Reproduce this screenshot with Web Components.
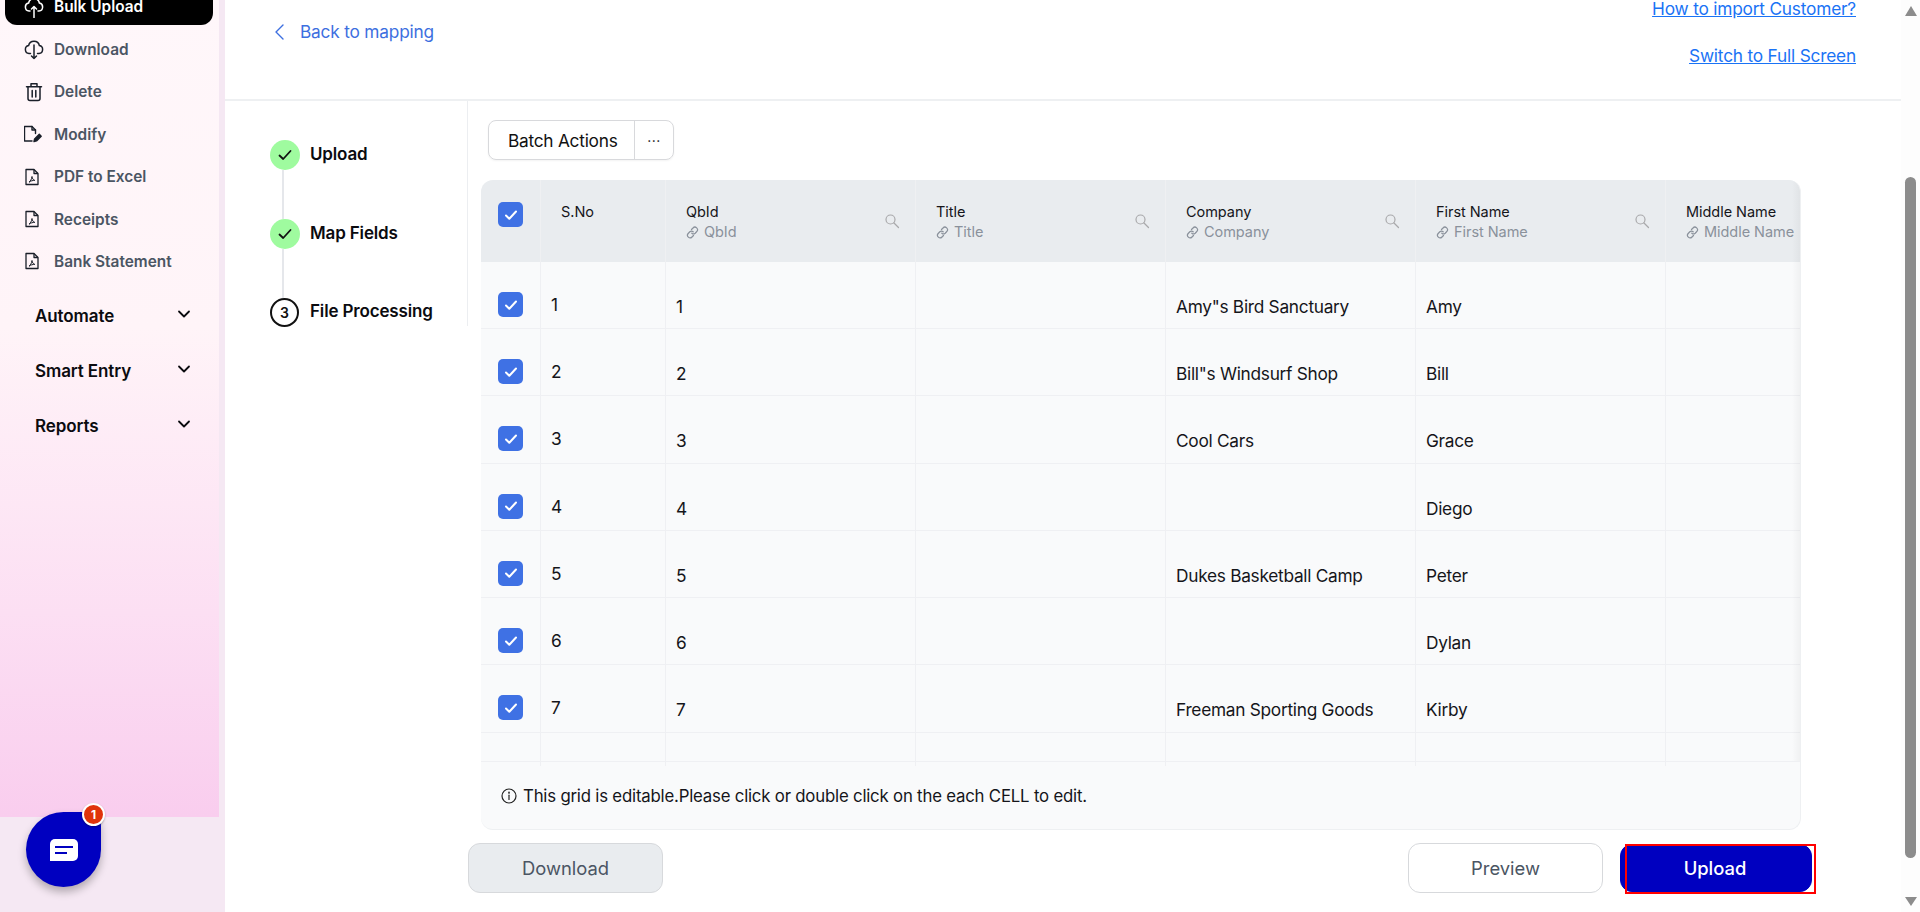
<!DOCTYPE html>
<html><head><meta charset="utf-8">
<style>
html,body{margin:0;height:100%;overflow:hidden;background:#fff;font-family:Inter,"Liberation Sans",sans-serif;}
</style></head><body>
<x-app></x-app>
<script>
const ICONS={
 up:'<svg width="20" height="22" viewBox="0 0 20 22" fill="none" stroke="currentColor" stroke-width="1.5" stroke-linecap="round" stroke-linejoin="round"><path d="M6 15H5A4 4 0 0 1 4.600 7.100 5.500 5.500 0 0 1 15.400 7.100 4 4 0 0 1 15 15H14"/><path d="M10 21.500V10.500M7.500 13 10 10.500 12.500 13"/></svg>',
 down:'<svg width="20" height="22" viewBox="0 0 20 22" fill="none" stroke="currentColor" stroke-width="1.5" stroke-linecap="round" stroke-linejoin="round"><path d="M6.500 15.500H5A4 4 0 0 1 4.600 7.600 5.500 5.500 0 0 1 15.400 7.600 4 4 0 0 1 15 15.500H13.500"/><path d="M10 7V20.500M7.500 18 10 20.500 12.500 18"/></svg>',
 trash:'<svg width="20" height="20" viewBox="0 0 20 20" fill="none" stroke="currentColor" stroke-width="1.5" stroke-linecap="round" stroke-linejoin="round"><path d="M2.500 4.800h15M7 4.800V1.800h6v3M4 4.800v11.700a2 2 0 0 0 2 2h8a2 2 0 0 0 2-2V4.800M8.200 8.500v6.500M11.800 8.500v6.500"/></svg>',
 edit:'<svg width="20" height="20" viewBox="1.500 -1 20 20" fill="none" stroke="currentColor" stroke-width="1.400" stroke-linecap="round" stroke-linejoin="round"><path d="M9.500 16H2V1.500h7.500l3.500 3.500V8.500"/><path d="M9.500 1.500V5H13"/><path d="M11.500 16.500l.6-2.500 4.700-4.700 1.900 1.900-4.700 4.700z" fill="currentColor"/></svg>',
 pdf:'<svg width="20" height="20" viewBox="2 0 20 20" fill="none" stroke="currentColor" stroke-width="1.300" stroke-linejoin="round"><path d="M4 2.500h8l4 4V17.500H4z"/><path d="M12 2.500v4h4"/><path d="M7 15.200c1.500-.9 2.600-3 3-5.700.3 2 1 3.300 2.800 3.900-2-.1-4 .5-5.800 1.800z" stroke-width="1"/></svg>',
 chev:'<svg width="14" height="10" viewBox="0 0 14 10" fill="none" stroke="currentColor" stroke-width="1.800" stroke-linecap="round" stroke-linejoin="round"><path d="M2 2.500 7 7.500 12 2.500"/></svg>',
 check:'<svg width="16" height="14" viewBox="0 0 16 14" fill="none" stroke="currentColor" stroke-width="1.800" stroke-linecap="round" stroke-linejoin="round"><path d="M2.500 7.500 6.200 11 13.500 3"/></svg>',
 tick:'<svg width="14" height="12" viewBox="0 0 14 12" fill="none" stroke="currentColor" stroke-width="2" stroke-linecap="round" stroke-linejoin="round"><path d="M2 6.500 5.300 9.800 12 2.500"/></svg>',
 search:'<svg width="16" height="16" viewBox="0 0 16 16" fill="none" stroke="#a9a9ab" stroke-width="1.200" stroke-linecap="round"><circle cx="6.500" cy="6.500" r="4.500"/><path d="M10 10l4.500 4.500"/></svg>',
 link:'<svg width="13" height="13" viewBox="0 0 13 13" fill="none" stroke="#8a919b" stroke-width="1.200" stroke-linecap="round"><path d="M5.500 3.500 7 2a2.500 2.500 0 0 1 3.800 3.500L9.200 7.200a2.500 2.500 0 0 1-3.400 0"/><path d="M7.500 9.500 6 11a2.500 2.500 0 0 1-3.800-3.500L3.800 5.800a2.500 2.500 0 0 1 3.400 0"/></svg>',
 info:'<svg width="16" height="16" viewBox="0 0 16 16" fill="none" stroke="#222" stroke-width="1.200" stroke-linecap="round"><circle cx="8" cy="8" r="7"/><path d="M8 7.200v4.300"/><path d="M8 4.300v.8" stroke-width="1.600"/></svg>'
};
function def(name,css,render){
 customElements.define(name,class extends HTMLElement{
  connectedCallback(){ if(this.shadowRoot) return; const s=this.attachShadow({mode:'open'}); s.innerHTML='<style>'+css+'</style>'+render(this); }
 });
}
def('x-nav-item',`
:host{display:flex;align-items:center;height:42.400px;padding-left:24px;font-size:15.400px;font-weight:600;color:#4b5563;gap:10px}
.i{width:20px;height:20px;display:flex;align-items:center;justify-content:center;color:#1a1f29}
`,h=>`<span class="i">${ICONS[h.getAttribute('icon')]}</span><slot></slot>`);
def('x-nav-active',`
:host{display:flex;align-items:center;box-sizing:border-box;height:40px;margin:-15px 0 3.300px 5px;width:208px;padding:3px 0 0 19px;gap:10px;background:#000;color:#fff;border-radius:0 0 12px 12px;font-size:15.400px;font-weight:600;line-height:12px}
.i{width:20px;height:20px;display:flex;align-items:center;justify-content:center}
`,h=>`<span class="i">${ICONS.up}</span><slot></slot>`);
def('x-nav-group',`
:host{display:flex;align-items:center;justify-content:space-between;height:55px;padding:0 28px 0 35px;font-size:17px;letter-spacing:-.1px;font-weight:600;color:#0b0b0f}
span{display:flex;margin-top:-4px}
`,h=>`<slot></slot><span>${ICONS.chev}</span>`);
def('x-sidebar',`
:host{display:block;position:relative;background:#f5e8f3;height:912px;overflow:hidden}
.g{width:219px;height:817px;background:linear-gradient(180deg,#fff7fa 0%,#fff4f8 40%,#fcdff3 75%,#f9cdee 100%)}
nav{display:flex;flex-direction:column}
.groups{margin-top:6px;}
`,h=>`<div class="g"><nav>
<x-nav-active>Bulk Upload</x-nav-active>
<x-nav-item icon="down">Download</x-nav-item>
<x-nav-item icon="trash">Delete</x-nav-item>
<x-nav-item icon="edit">Modify</x-nav-item>
<x-nav-item icon="pdf">PDF to Excel</x-nav-item>
<x-nav-item icon="pdf">Receipts</x-nav-item>
<x-nav-item icon="pdf">Bank Statement</x-nav-item>
<div class="groups"><x-nav-group>Automate</x-nav-group><x-nav-group>Smart Entry</x-nav-group><x-nav-group>Reports</x-nav-group></div>
</nav></div>`);
def('x-chat',`
:host{position:absolute;left:26px;top:812px;width:75px;height:75px;display:flex;align-items:center;justify-content:center;background:#0000c0;border-radius:50% 14px 50% 50%;box-shadow:0 5px 8px rgba(0,0,0,.28)}
svg{display:block}
.b{position:absolute;left:56px;top:-9px;width:19px;height:19px;border-radius:50%;background:#e0330b;border:2px solid #fff;color:#fff;font:700 12px/19px Inter,sans-serif;text-align:center;box-shadow:0 1px 2px rgba(0,0,0,.3)}
`,h=>`<svg width="28" height="22" viewBox="0 0 28 22"><path d="M5 0h18a5 5 0 0 1 5 5v12a5 5 0 0 1-5 5H0V5a5 5 0 0 1 5-5z" fill="#fff"/><path d="M5 8h18" stroke="#0000c0" stroke-width="2"/><path d="M5 14h12" stroke="#0000c0" stroke-width="2"/></svg><span class="b">1</span>`);
def('x-header',`
:host{display:flex;justify-content:space-between;box-sizing:border-box;height:101px;flex:none;border-bottom:2px solid #eef0f2;padding:0 45px 0 50px;font-size:17.300px;letter-spacing:-.2px;line-height:24px}
.back{display:flex;align-items:center;gap:16px;color:#3d6fe0;height:24px;margin-top:20px}
.links{display:flex;flex-direction:column;align-items:flex-end;gap:23px;margin-top:-3px}
a{color:#1a73f5;text-decoration:underline}
`,h=>`<div class="back"><svg width="9" height="16" viewBox="0 0 9 16" fill="none" stroke="#3d6fe0" stroke-width="1.400" stroke-linecap="round" stroke-linejoin="round"><path d="M8 1 1 8l7 7"/></svg><span>Back to mapping</span></div><div class="links"><a>How to import Customer?</a><a>Switch to Full Screen</a></div>`);
def('x-step',`
:host{display:block}
.r{display:flex;align-items:center;gap:10px;font-size:17px;letter-spacing:-.15px;font-weight:600;color:#0b0b0f}
.c{width:30px;height:30px;border-radius:50%;background:#9ffb9f;display:flex;align-items:center;justify-content:center;color:#111;box-sizing:border-box}
:host([num]) .c{width:29px;height:29px;background:#fff;border:2px solid #111;font-size:14px;font-weight:600;margin-right:1px}
.l{width:2px;height:49px;background:#e5e7eb;margin-left:12px}
:host([num]) .l{display:none}
span.t{margin-top:-3px}
`,h=>`<div class="r"><span class="c">${h.getAttribute('num')||ICONS.check}</span><span class="t"><slot></slot></span></div><div class="l"></div>`);
def('x-stepper',`
:host{display:block;box-sizing:content-box;width:197px;height:186px;padding:39px 0 0 45px;border-right:1px solid #eceef1;align-self:flex-start;flex:none}
`,h=>`<x-step>Upload</x-step><x-step>Map Fields</x-step><x-step num="3">File Processing</x-step>`);
def('x-batch',`
:host{display:inline-flex;align-self:flex-start;height:40px;box-sizing:border-box;margin:0 0 20px 20px;border:1px solid #d8d9dc;border-radius:8px;font-size:17.300px;letter-spacing:-.25px;color:#111;box-shadow:0 1px 2px rgba(0,0,0,.05)}
.a{display:flex;align-items:center;padding:1px 0 0 19px;border-right:1px solid #d8d9dc;width:126px;box-sizing:content-box;white-space:nowrap}
.m{width:38px;display:flex;align-items:center;justify-content:center;font-size:14px;letter-spacing:.5px}
`,h=>`<div class="a">Batch Actions</div><div class="m">···</div>`);
const COLS='60px 125px 250px 250px 250px 250px 136px';
const css_row=`:host{display:grid;grid-template-columns:${COLS};background:#f9fafb;border-bottom:1px solid #eff0f3;box-sizing:border-box;height:var(--h,67.300px)}
div{border-right:1px solid #eff0f3;box-sizing:border-box;font-size:17.300px;letter-spacing:-.28px;line-height:24px;color:#15151a;white-space:nowrap}
.cb{padding:30px 0 0 17px}
.sn{padding:31px 0 0 10px}
.d{padding:33px 0 0 10px}
.box{width:25px;height:25px;background:#3f71e4;border-radius:5px;display:flex;align-items:center;justify-content:center;color:#fff;border:0;padding:0}
`;
def('x-row',css_row,h=>{
 const n=h.getAttribute('n');
 const c=(h.getAttribute('cells')||'|||').split('|');
 const box=n?`<span class="box">${ICONS.tick}</span>`:'';
 return `<div class="cb">${box}</div><div class="sn">${n||''}</div><div class="d">${n||''}</div>`+c.map(t=>`<div class="d">${t}</div>`).join('');
});
def('x-grid-head',`:host{display:grid;grid-template-columns:${COLS};height:82px;background:#e9ecef}
.c{border-right:1px solid #eff0f2;box-sizing:border-box;padding:22px 0 0 20px;display:flex;justify-content:space-between;font-size:14.500px;letter-spacing:-.05px;line-height:20px;color:#15151a;white-space:nowrap;position:relative;min-width:0;overflow:hidden}
.c0{padding:22px 0 0 17px}
.box{width:25px;height:25px;background:#3f71e4;border-radius:5px;display:flex;align-items:center;justify-content:center;color:#fff}
.sub{display:flex;align-items:center;gap:5px;color:#8a919b}
.s{padding:11px 15px 0 0;flex:none}
`,h=>{
 const col=(t)=>`<div class="c"><div>${t}<div class="sub">${ICONS.link}${t}</div></div><span class="s">${ICONS.search}</span></div>`;
 return `<div class="c c0"><span class="box">${ICONS.tick}</span></div><div class="c">S.No</div>`+['QbId','Title','Company','First Name'].map(col).join('')+`<div class="c"><div>Middle Name<div class="sub">${ICONS.link}Middle Name</div></div></div>`;
});
def('x-grid',`
:host{display:block;position:relative;margin-left:13px;width:1320px;height:650px;box-sizing:border-box;border-radius:12px;overflow:hidden;border:1px solid #eef0f2;border-top:0;border-left:0;background:#f9fafb;flex:none}
:host::after{content:"";position:absolute;right:0;top:0;bottom:68px;width:8px;background:linear-gradient(90deg,rgba(0,0,0,0),rgba(0,0,0,.035))}
.foot{display:flex;align-items:center;gap:6px;height:68px;font-size:16.800px;letter-spacing:-.2px;color:#15151a;padding-left:20px;white-space:nowrap}
`,h=>`<x-grid-head></x-grid-head>
<x-row n="1" cells="|Amy&quot;s Bird Sanctuary|Amy|" style="--h:67px"></x-row>
<x-row n="2" cells="|Bill&quot;s Windsurf Shop|Bill|"></x-row>
<x-row n="3" cells="|Cool Cars|Grace|"></x-row>
<x-row n="4" cells="||Diego|"></x-row>
<x-row n="5" cells="|Dukes Basketball Camp|Peter|"></x-row>
<x-row n="6" cells="||Dylan|"></x-row>
<x-row n="7" cells="|Freeman Sporting Goods|Kirby|"></x-row>
<x-row style="--h:29px"></x-row>
<div class="foot">${ICONS.info}<span>This grid is editable.Please click or double click on the each CELL to edit.</span></div>`);
def('x-btn',`
:host{display:flex;align-items:center;justify-content:center;position:relative;box-sizing:border-box;height:50px;border-radius:12px;font-size:18.400px;font-weight:400;border:1px solid #d7d9dc;color:#4b5563;background:#fff;width:195px;flex:none}
:host([kind=gray]){background:#e9ecef;width:195px;border-color:#d7d9dc}
:host([kind=primary]){background:#0000c0;border-color:#0000c0;color:#fff;width:192px;height:48px;margin-top:1px;font-weight:500;padding-right:2px}
.hl{position:absolute;left:4px;right:-5px;top:-1px;bottom:-3px;border:2px solid #f00;pointer-events:none}
`,h=>`<slot></slot>${h.getAttribute('kind')==='primary'?'<span class="hl"></span>':''}`);
def('x-actions',`
:host{display:flex;margin-top:13px;gap:17px;padding-right:89px}
.sp{flex:1}
`,h=>`<x-btn kind="gray">Download</x-btn><span class="sp"></span><x-btn>Preview</x-btn><x-btn kind="primary">Upload</x-btn>`);
def('x-scrollbar',`
:host{display:flex;flex-direction:column;align-items:center;background:#fdfdfd;height:912px;box-sizing:border-box;padding-top:6px}
i{display:block;width:0;height:0;border-left:6.500px solid transparent;border-right:6.500px solid transparent}
.u{border-bottom:10px solid #8c8c8c}
.d{border-top:9px solid #8c8c8c;margin-top:39px}
.t{width:11px;height:681px;background:#8c8c8c;border-radius:6px;margin-top:161px}
`,h=>`<i class="u"></i><div class="t"></div><i class="d"></i>`);
def('x-app',`
:host{display:grid;grid-template-columns:225px 1fr 19px;height:912px;width:1920px;overflow:hidden;position:relative}
main{display:flex;flex-direction:column;min-width:0}
.body{display:flex;flex:1;min-height:0}
.col{display:flex;flex-direction:column;flex:1;min-width:0;padding-top:19px}
`,h=>`<x-sidebar></x-sidebar>
<main><x-header></x-header><div class="body"><x-stepper></x-stepper><div class="col"><x-batch></x-batch><x-grid></x-grid><x-actions></x-actions></div></div></main>
<x-scrollbar></x-scrollbar><x-chat></x-chat>`);
</script>
</body></html>
